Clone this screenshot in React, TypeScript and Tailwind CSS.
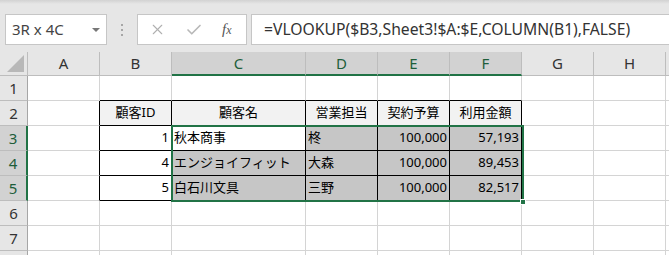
import { Check, X } from "lucide-react";

const cols = ["A", "B", "C", "D", "E", "F", "G", "H"];
const selCols = ["C", "D", "E", "F"];
const selRows = [3, 4, 5];

type Cell = { text?: string; align?: "left" | "right" | "center"; head?: boolean };

const data: Record<number, Cell[]> = {
  2: [
    {},
    { text: "顧客ID", align: "center", head: true },
    { text: "顧客名", align: "center", head: true },
    { text: "営業担当", align: "center", head: true },
    { text: "契約予算", align: "center", head: true },
    { text: "利用金額", align: "center", head: true },
  ],
  3: [{}, { text: "1", align: "right" }, { text: "秋本商事" }, { text: "柊" }, { text: "100,000", align: "right" }, { text: "57,193", align: "right" }],
  4: [{}, { text: "4", align: "right" }, { text: "エンジョイフィット" }, { text: "大森" }, { text: "100,000", align: "right" }, { text: "89,453", align: "right" }],
  5: [{}, { text: "5", align: "right" }, { text: "白石川文具" }, { text: "三野" }, { text: "100,000", align: "right" }, { text: "82,517", align: "right" }],
};

function inTable(row: number, col: number) {
  return row >= 2 && row <= 5 && col >= 1 && col <= 5;
}

function SheetCell({ row, col }: { row: number; col: number }) {
  const cell = data[row]?.[col] ?? {};
  const selected = row >= 3 && row <= 5 && col >= 2 && col <= 5;
  const active = row === 3 && col === 2;
  const blackRight = inTable(row, col) || inTable(row, col + 1);
  const blackBottom = inTable(row, col) || inTable(row + 1, col);

  let bg = "bg-white";
  if (cell.head) bg = "bg-[#f2f2f2]";
  if (selected && !active) bg = "bg-[#c6c6c6]";

  const align =
    cell.align === "right" ? "justify-end pr-[2px]" : cell.align === "center" ? "justify-center" : "justify-start pl-[2px]";

  return (
    <div
      className={`flex items-center border-r border-b text-[13px] text-black ${bg} ${align} ${
        blackRight ? "border-r-black" : "border-r-[#d4d4d4]"
      } ${blackBottom ? "border-b-black" : "border-b-[#d4d4d4]"}`}
    >
      {cell.text}
    </div>
  );
}

export default function App() {
  const rows = [1, 2, 3, 4, 5, 6, 7, 8];

  return (
    <div
      className="w-[669px] h-[255px] overflow-hidden bg-white"
      style={{ fontFamily: '"Noto Sans", "Noto Sans CJK JP", sans-serif' }}
    >
      {/* Formula bar */}
      <div className="relative h-[52px] bg-[#e6e6e6]">
        <div className="h-[4px] bg-linear-to-b from-[#d2d2d2] to-[#e6e6e6]" />
        <div className="flex items-center h-[48px] pt-[3px]">
          <div className="ml-[5px] flex items-center justify-between w-[102px] h-[31px] bg-white border border-[#c6c6c6] pl-[6px] pr-[6px]">
            <span className="text-[15px] text-[#444]">3R x 4C</span>
            <span className="w-0 h-0 border-l-[4px] border-r-[4px] border-t-[4px] border-l-transparent border-r-transparent border-t-[#777]" />
          </div>
          <div className="flex flex-col gap-[3px] w-[30px] items-center">
            <span className="w-[2px] h-[2px] bg-[#a6a6a6]" />
            <span className="w-[2px] h-[2px] bg-[#a6a6a6]" />
            <span className="w-[2px] h-[2px] bg-[#a6a6a6]" />
          </div>
          <div className="flex items-center w-[110px] h-[31px] bg-white border border-[#c6c6c6]">
            <X size={17} strokeWidth={1.5} className="ml-[11px] text-[#b0b0b0]" />
            <Check size={18} strokeWidth={2.2} className="ml-[19px] text-[#b8b8b8]" />
            <span
              className="ml-[19px] text-[15px] italic text-[#555]"
              style={{ fontFamily: '"Liberation Serif", serif' }}
            >
              f<span className="text-[12px]">x</span>
            </span>
          </div>
          <div className="ml-[4px] flex-1 flex items-center h-[31px] bg-white border border-[#c6c6c6] border-r-0 pl-[12px]">
            <span className="text-[15.7px] text-[#333] whitespace-nowrap">=VLOOKUP($B3,Sheet3!$A:$E,COLUMN(B1),FALSE)</span>
          </div>
        </div>
      </div>

      {/* Sheet */}
      <div className="relative grid grid-cols-[28px_72px_72px_134px_72px_72px_72px_72px_72px_1fr] grid-rows-[24px_repeat(8,25px)]">
        {/* corner */}
        <div className="relative bg-[#e6e6e6] border-r border-b border-[#bdbdbd]">
          <span
            className="absolute right-[3px] bottom-[3px] w-0 h-0"
            style={{ borderBottom: "17px solid #b8b8b8", borderLeft: "17px solid transparent" }}
          />
        </div>
        {cols.map((c) => {
          const sel = selCols.includes(c);
          return (
            <div
              key={c}
              className={`flex items-center justify-center text-[15px] border-r ${
                sel
                  ? "bg-[#d2d2d2] text-[#1e5e3a] border-r-[#bdbdbd] border-b-2 border-b-[#217346]"
                  : "bg-[#e6e6e6] text-[#333] border-r-[#bdbdbd] border-b border-b-[#bdbdbd]"
              }`}
            >
              {c}
            </div>
          );
        })}
        <div className="bg-[#e6e6e6] border-b border-[#bdbdbd]" />

        {rows.map((r) => {
          const sel = selRows.includes(r);
          return [
            <div
              key={`h${r}`}
              className={`flex items-center justify-center text-[15px] border-b border-b-[#bdbdbd] ${
                sel
                  ? "bg-[#d2d2d2] text-[#1e5e3a] border-r-2 border-r-[#217346]"
                  : "bg-[#e6e6e6] text-[#333] border-r border-r-[#a6a6a6]"
              }`}
            >
              {r < 8 ? r : ""}
            </div>,
            ...cols.map((_, i) => <SheetCell key={`${r}-${i}`} row={r} col={i} />),
            <div key={`t${r}`} className="border-b border-[#d4d4d4]" />,
          ];
        })}

        {/* selection range */}
        <div className="absolute left-[171px] top-[73px] w-[353px] h-[77px] border-2 border-[#217346] pointer-events-none" />
        <div className="absolute left-[520px] top-[147px] w-[6px] h-[6px] bg-[#217346] border border-white" />
      </div>
    </div>
  );
}
